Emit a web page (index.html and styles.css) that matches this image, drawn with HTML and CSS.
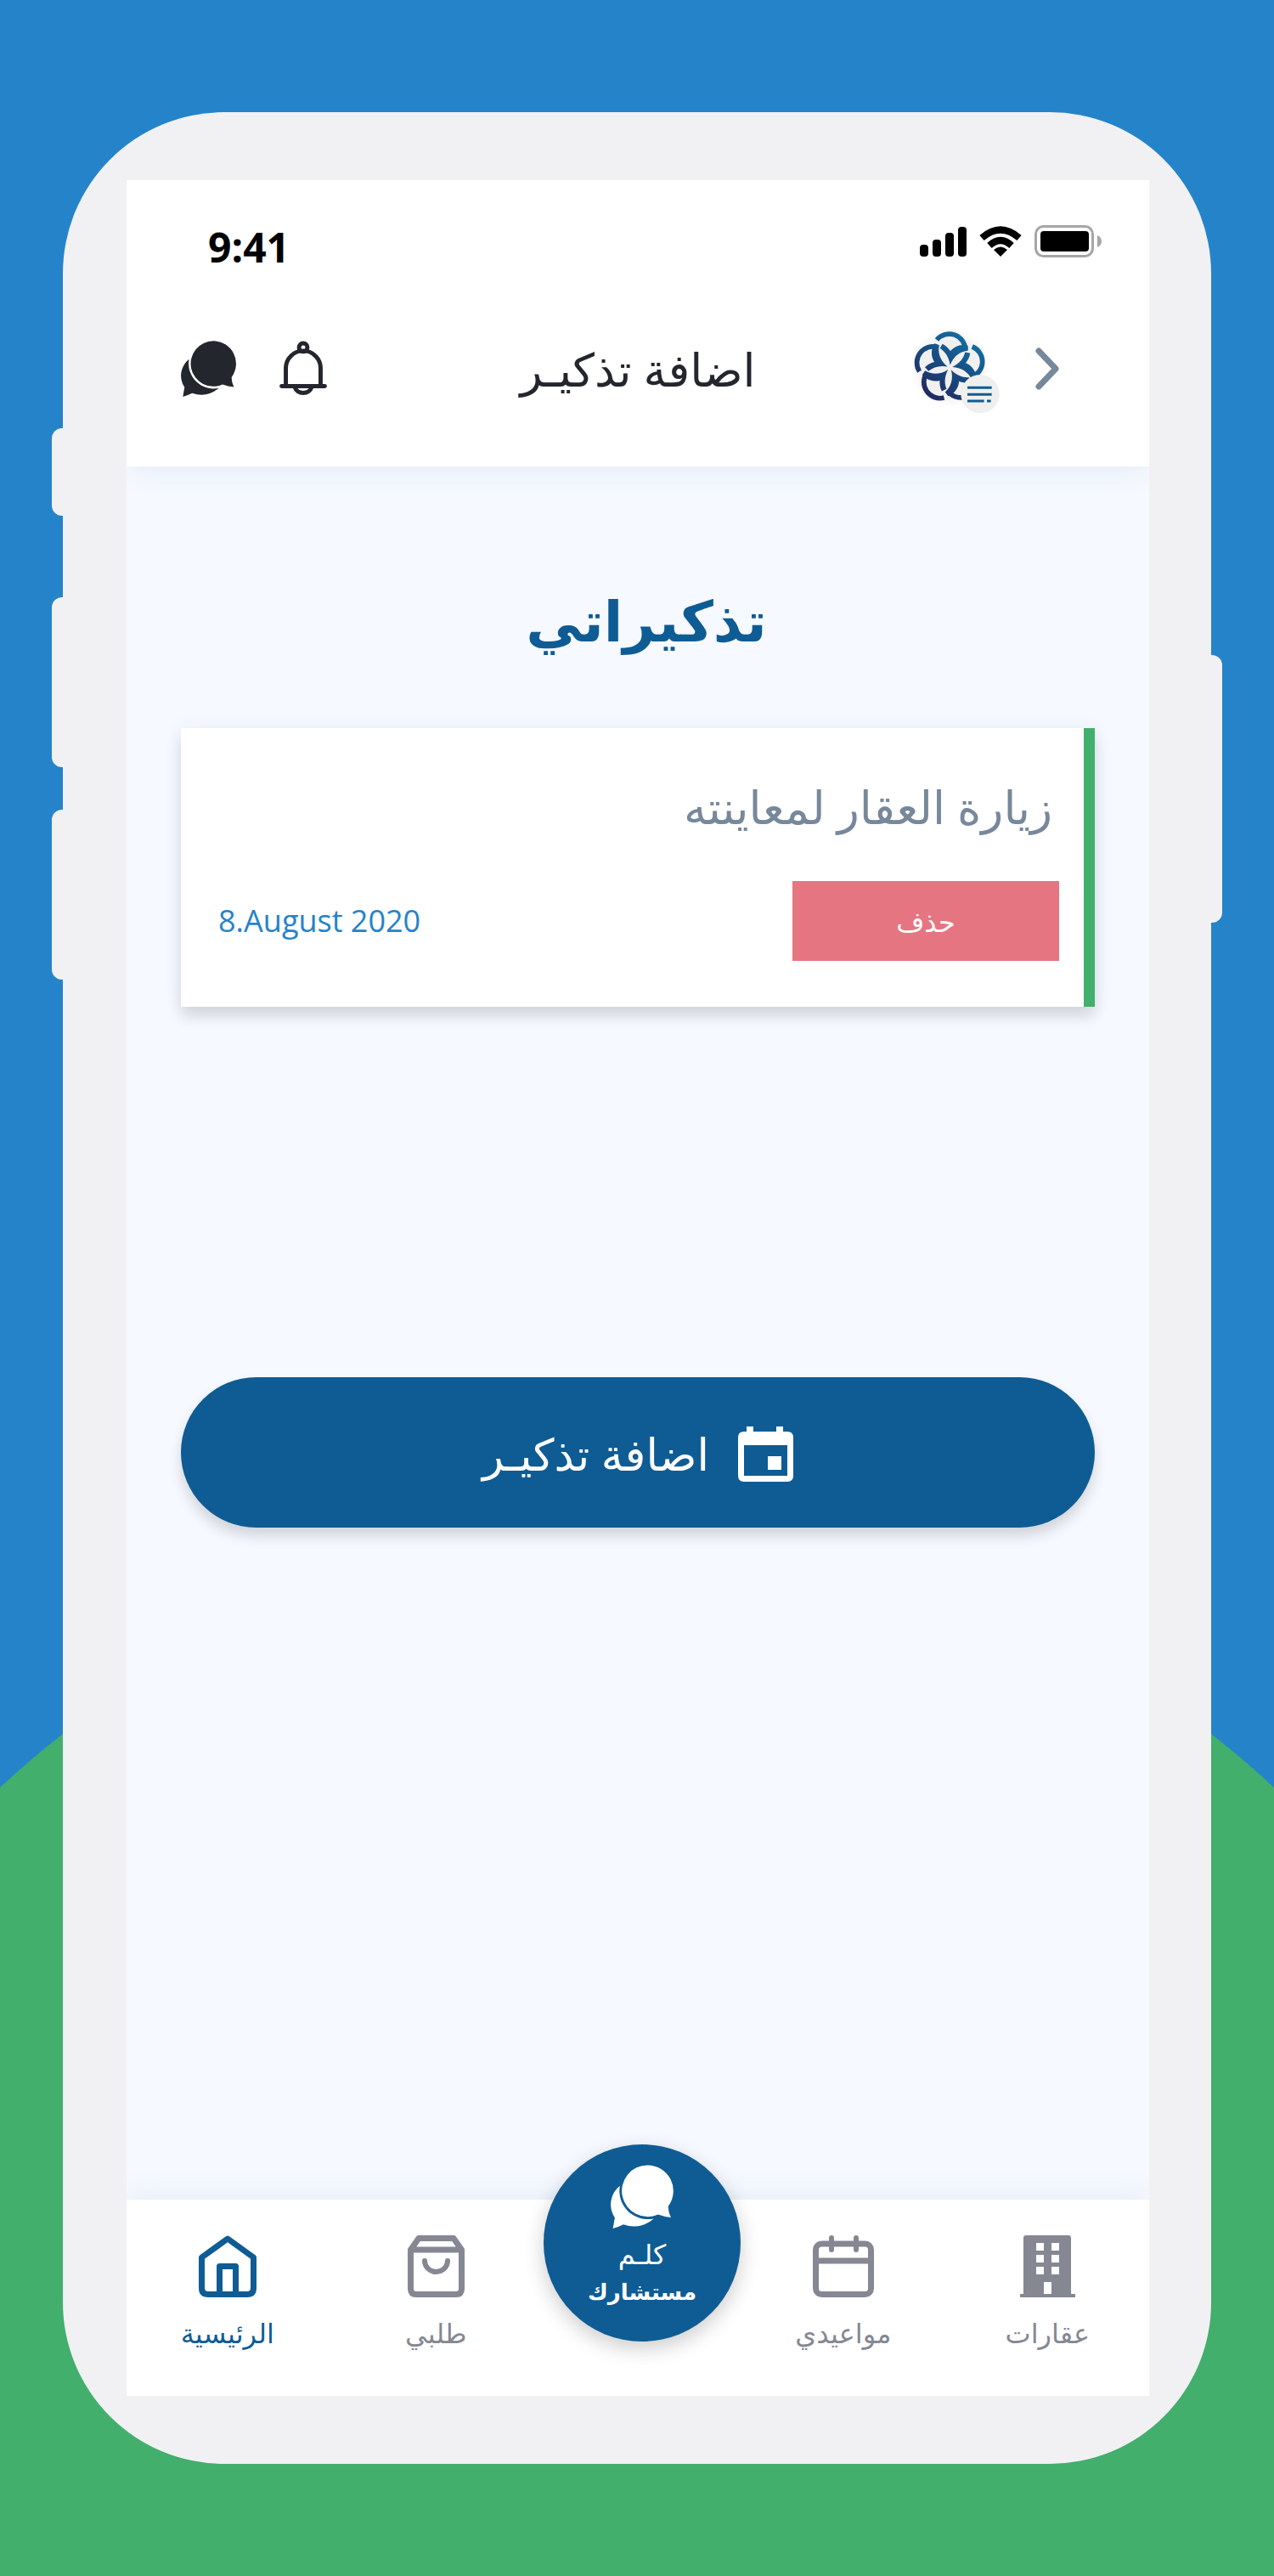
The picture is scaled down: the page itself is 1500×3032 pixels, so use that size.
FILE: index.html
```
<!DOCTYPE html>
<html lang="ar" dir="rtl">
<head>
<meta charset="utf-8">
<meta name="viewport" content="width=device-width, initial-scale=1">
<title>اضافة تذكيـر</title>
<link rel="stylesheet" href="styles.css">
</head>
<body>
<svg width="0" height="0" class="sprite" aria-hidden="true">
  <symbol id="chat" viewBox="68 62 200 200">
    <path d="M184 63A81 81 0 0 1 249 192Q248 210 257 227Q235 225 217 218A81 81 0 1 1 184 63Z"/>
    <path d="M97 128A74 74 0 0 0 81 228L75 262Q92 257 108 249Q160 268 203 231A89 89 0 0 1 97 128Z"/>
  </symbol>
</svg>
<div class="stage">
  <div class="phone">
    <span class="key key-mute"></span>
    <span class="key key-up"></span>
    <span class="key key-down"></span>
    <span class="key key-power"></span>
    <div class="screen">
      <header class="header">
        <div class="status" dir="ltr">
          <span class="time">9:41</span>
          <div class="indicators">
            <svg width="55" height="36" viewBox="0 0 55 36" aria-hidden="true">
              <rect x="0" y="22" width="10" height="14" rx="4"/><rect x="15" y="16" width="10" height="20" rx="4"/><rect x="30" y="8" width="10" height="28" rx="4"/><rect x="45" y="1" width="10" height="35" rx="4"/>
            </svg>
            <svg width="50" height="36" viewBox="0 0 50 36" aria-hidden="true">
              <g fill="none" stroke="#000" stroke-width="8"><path d="M3 14Q25-5 47 14"/><path d="M12 23Q25 11 38 23"/></g>
              <path d="M17 28Q25 21 33 28L25 36Z"/>
            </svg>
            <svg width="79" height="38" viewBox="0 0 79 38" aria-hidden="true">
              <rect x="1.500" y="1.500" width="67" height="35" rx="9" fill="none" stroke="#a6a6a6" stroke-width="3"/>
              <rect x="7" y="7" width="57" height="24" rx="4"/><path d="M74 12Q79 14 79 19T74 26Z" fill="#a6a6a6"/>
            </svg>
          </div>
        </div>
        <div class="topbar">
          <div class="brand">
            <button class="icon-button back" type="button" aria-label="رجوع">
              <svg width="28" height="50" viewBox="0 0 28 50"><path d="M4 4L24 25L4 46" fill="none" stroke="#77889b" stroke-width="7" stroke-linecap="round" stroke-linejoin="round"/></svg>
            </button>
            <button class="icon-button logo" type="button" aria-label="القائمة">
              <svg width="102" height="112" viewBox="108 23 306 336">
                <defs>
                  <linearGradient id="ink" gradientUnits="userSpaceOnUse" x1="160" y1="300" x2="310" y2="80"><stop offset="0" stop-color="#22265e"/><stop offset="1" stop-color="#106fa4"/></linearGradient>
                  <radialGradient id="haze"><stop offset="0.700" stop-color="#f0f0f0"/><stop offset="1" stop-color="#fff"/></radialGradient>
                  <g id="petal"><path d="M-46-98A57 57 0 0 1 55-62" fill="none" stroke="#fff" stroke-width="17"/><path d="M64-78V-60C38-58 13-41 1-9C-3-37-16-56-35-68L-26-84C-12-77-3-66 2-58C12-70 28-80 48-80Z" fill="#fff"/></g>
                  <mask id="bloom" maskUnits="userSpaceOnUse" x="100" y="40" width="300" height="300"><g transform="translate(238 187)">
                    <use href="#petal"/><use href="#petal" transform="rotate(72)"/><use href="#petal" transform="rotate(144)"/><use href="#petal" transform="rotate(216)"/><use href="#petal" transform="rotate(288)"/></g></mask>
                </defs>
                <circle cx="238" cy="187" r="140" fill="url(#haze)"/>
                <rect x="100" y="40" width="300" height="300" fill="url(#ink)" mask="url(#bloom)"/>
                <circle cx="345" cy="280" r="68" fill="#efefef"/>
                <path d="M300 258H386M300 282H386M300 305H359M369 305H383" stroke="#0f5c94" stroke-width="9"/>
              </svg>
            </button>
          </div>
          <h2 class="title">اضافة تذكيـر</h2>
          <div class="actions">
            <button class="icon-button" type="button" aria-label="التنبيهات">
              <svg width="56" height="66" viewBox="417 62 168 200" fill="none" stroke="#24262d" stroke-width="15"><circle cx="501" cy="86" r="15"/><path d="M439 222V160A62 62 0 0 1 563 160V222"/><path d="M424 224H578" stroke-linecap="round"/><path d="M471 228A31 27 0 0 0 531 228"/></svg>
            </button>
            <button class="icon-button" type="button" aria-label="المحادثات">
              <svg width="66" height="66" fill="#24262d"><use href="#chat"/></svg>
            </button>
          </div>
        </div>
      </header>
      <main class="content">
        <h1 class="heading">تذكيراتي</h1>
        <article class="card">
          <h3 class="card-title">زيارة العقار لمعاينته</h3>
          <div class="card-row">
            <button class="delete" type="button">حذف</button>
            <time class="date" datetime="2020-08-08" dir="ltr">8.August 2020</time>
          </div>
        </article>
        <button class="add" type="button">
          <svg width="65" height="65" viewBox="0 0 65 65" fill="#fff" aria-hidden="true"><path fill-rule="evenodd" d="M10 0H18V6H45V0H53V6H58Q65 6 65 13V58Q65 65 58 65H7Q0 65 0 58V13Q0 6 7 6H10ZM7 22V58H58V22Z"/><path d="M35 35H51V51H35Z"/></svg>
          <span>اضافة تذكيـر</span>
        </button>
      </main>
      <nav class="tabs">
        <a class="tab" href="#properties">
          <svg width="65" height="73" viewBox="0 0 65 73" fill="#858793" aria-hidden="true"><path fill-rule="evenodd" d="M4 3Q4 0 7 0H57Q60 0 60 3V69H65V73H0V69H4ZM19 9V18H28V9ZM37 9V18H46V9ZM19 23V32H28V23ZM37 23V32H46V23ZM19 37V46H28V37ZM37 37V46H46V37ZM28 55V69H37V55Z"/></svg>
          <span>عقارات</span>
        </a>
        <a class="tab" href="#appointments">
          <svg width="72" height="73" viewBox="0 0 72 73" fill="none" stroke="#858793" stroke-width="7" aria-hidden="true"><rect x="3.500" y="10" width="65" height="59.500" rx="7"/><path d="M4 30H68"/><path d="M22 3V17M51 3V17" stroke-width="6" stroke-linecap="round"/></svg>
          <span>مواعيدي</span>
        </a>
        <div class="tab-center">
          <a class="consult" href="#consult">
            <svg width="75" height="75" fill="#fff" aria-hidden="true"><use href="#chat"/></svg>
            <span>كلـم</span>
            <strong>مستشارك</strong>
          </a>
        </div>
        <a class="tab" href="#order">
          <svg width="67" height="73" viewBox="0 0 67 73" fill="none" stroke="#858793" stroke-width="7" stroke-linejoin="round" stroke-linecap="round" aria-hidden="true"><path d="M3.500 17L13 3.500H54L63.500 17V63Q63.500 69.500 57 69.500H10Q3.500 69.500 3.500 63ZM4 17H63"/><path d="M20 30A13.500 13 0 0 0 47 30" stroke-width="6"/></svg>
          <span>طلبي</span>
        </a>
        <a class="tab active" href="#home" aria-current="page">
          <svg width="68" height="73" viewBox="0 0 68 73" fill="none" stroke="#0f5c94" stroke-width="7" stroke-linejoin="round" aria-hidden="true"><path d="M3.500 26L34 4L64.500 26V62Q64.500 69.500 57 69.500H11Q3.500 69.500 3.500 62Z"/><path d="M24.500 69V36.500H43.500V69"/></svg>
          <span>الرئيسية</span>
        </a>
      </nav>
    </div>
  </div>
</div>
</body>
</html>
```
FILE: styles.css
```
* {
  box-sizing: border-box;
}

body {
  margin: 0;
  font-family: "Open Sans", "DejaVu Sans", sans-serif;
  background: #2583ca;
}

button {
  font: inherit;
  border: 0;
  cursor: pointer;
}

a {
  color: inherit;
  text-decoration: none;
}

h1, h2, h3 {
  margin: 0;
}

svg {
  display: block;
  flex: none;
}

.sprite {
  position: absolute;
}

.stage {
  min-height: 100vh;
  padding: 132px 74px;
  background: radial-gradient(circle at 50% 2908px, #42af6c 1099px, #2583ca 1100px);
}

.phone {
  position: relative;
  padding: 80px 73px 80px 75px;
  border-radius: 190px;
  background: #f1f1f4;
}

.key {
  position: absolute;
  left: -13px;
  width: 26px;
  height: 200px;
  border-radius: 12px;
  background: #f1f1f4;
}

.key-mute {
  top: 372px;
  height: 103px;
}

.key-up {
  top: 571px;
}

.key-down {
  top: 821px;
}

.key-power {
  top: 639px;
  right: -13px;
  left: auto;
  height: 315px;
}

.screen {
  display: flex;
  flex-direction: column;
  min-height: 2608px;
  overflow: hidden;
  background: #f6f9ff;
}

.header {
  padding-bottom: 37px;
  background: #fff;
  box-shadow: 0 8px 32px #0f3c780f;
}

.status {
  display: flex;
  align-items: center;
  justify-content: space-between;
  height: 144px;
  padding: 0 56px 0 96px;
}

.time {
  padding-top: 14px;
  color: #000;
  font: 700 48px/56px "Open Sans", sans-serif;
}

.indicators {
  display: flex;
  align-items: center;
  gap: 15px;
}

.topbar {
  display: grid;
  grid-template-columns: 1fr auto 1fr;
  align-items: center;
  height: 156px;
  padding: 0 64px;
}

.brand,
.actions {
  display: flex;
  align-items: center;
}

.actions {
  justify-content: flex-end;
  gap: 50px;
}

.icon-button {
  padding: 0;
  background: none;
}

.back {
  padding: 0 42px;
}

.title {
  color: #24262d;
  font-size: 54px;
  font-weight: 400;
  line-height: 72px;
}

.content {
  display: flex;
  flex: 1;
  flex-direction: column;
  padding: 132px 64px;
}

.heading {
  padding-left: 20px;
  color: #0f5c94;
  font-size: 66px;
  line-height: 96px;
  text-align: center;
}

.card {
  margin-top: 80px;
  padding: 56px 29px 54px 44px;
  border-right: 13px solid #42af6c;
  background: #fff;
  box-shadow: 0 12px 16px #0000001f, 0 0 24px #0f3c780f;
}

.card-title {
  padding-right: 8px;
  color: #77889b;
  font-size: 54px;
  font-weight: 400;
  line-height: 72px;
}

.card-row {
  display: flex;
  align-items: center;
  justify-content: space-between;
  margin-top: 52px;
}

.delete {
  width: 314px;
  height: 94px;
  color: #fff;
  font-size: 32px;
  background: #e57681;
}

.date {
  color: #2583ca;
  font-size: 36px;
  font-weight: 500;
  line-height: 48px;
}

.add {
  display: flex;
  align-items: center;
  justify-content: center;
  gap: 34px;
  height: 177px;
  margin-top: 436px;
  padding-top: 4px;
  border-radius: 89px;
  color: #fff;
  font-size: 52px;
  line-height: 72px;
  background: #0f5c94;
  box-shadow: 0 10px 16px #00000026;
}

.tabs {
  display: grid;
  grid-template-columns: 240fr 242fr 230fr 254fr 238fr;
  height: 231px;
  background: #fff;
  box-shadow: 0 -8px 32px #0f3c780f;
}

.tab {
  display: flex;
  flex-direction: column;
  align-items: center;
  gap: 18px;
  padding-top: 42px;
  color: #858793;
  font-size: 32px;
  line-height: 48px;
}

.active {
  color: #0f5c94;
}

.tab-center {
  display: flex;
  justify-content: center;
}

.consult {
  display: flex;
  flex: none;
  flex-direction: column;
  align-items: center;
  width: 232px;
  height: 232px;
  margin-top: -65px;
  padding-top: 24px;
  border-radius: 50%;
  color: #fff;
  font-size: 26px;
  line-height: 44px;
  background: #0f5c94;
  box-shadow: 0 8px 24px #00000033;
}

.consult span {
  margin-top: 8px;
  font-size: 32px;
}
```
